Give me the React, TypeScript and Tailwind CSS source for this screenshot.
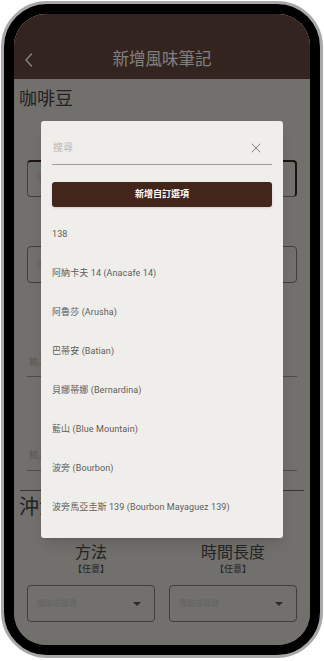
import { X } from "lucide-react";

const font = { fontFamily: '"Roboto", "Noto Sans CJK TC", sans-serif' };

const beans = [
  "138",
  "阿納卡夫 14 (Anacafe 14)",
  "阿魯莎 (Arusha)",
  "巴蒂安 (Batian)",
  "貝娜蒂娜 (Bernardina)",
  "藍山 (Blue Mountain)",
  "波旁 (Bourbon)",
  "波旁馬亞圭斯 139 (Bourbon Mayaguez 139)",
];

function Caret() {
  return <span className="h-0 w-0 border-x-[4px] border-t-[4px] border-x-transparent border-t-[#555]" />;
}

function Picker({ label }: { label: string }) {
  return (
    <div className="flex flex-1 flex-col items-center">
      <div className="text-[16px] leading-[20px] text-[#4a4a4a]">{label}</div>
      <div className="text-[9px] leading-[12px] text-[#4a4a4a]">【任意】</div>
      <div className="mt-[10px] flex h-[37px] w-full items-center justify-between rounded-[4px] border border-[#7e7c76] pl-[9px] pr-[13px]">
        <span className="text-[8px] text-[#c9c7c0]">選取或搜尋</span>
        <Caret />
      </div>
    </div>
  );
}

export default function App() {
  return (
    <div className="h-[661px] w-[324px] bg-white p-[1px]" style={font}>
      <div className="h-[657px] w-[322px] rounded-[46px] border-[3px] border-[#a8a8a8] bg-black p-[10px]">
        <div className="relative h-[631px] w-[296px] overflow-hidden rounded-[32px] bg-[#e2e0d8]">
          {/* page under the dialog */}
          <header className="flex h-[65px] items-end bg-[#68483e]">
            <div className="relative flex h-[38px] w-full items-center justify-center">
              <svg className="absolute left-[9px]" width="12" height="16" viewBox="0 0 12 16" fill="none">
                <path d="M8.5 2 L3 8 L8.5 14" stroke="white" strokeWidth="1.6" strokeLinecap="round" strokeLinejoin="round" />
              </svg>
              <h1 className="text-[16.5px] text-white">新增風味筆記</h1>
            </div>
          </header>

          <div className="px-[5px]">
            <h2 className="mt-[8px] text-[18px] leading-[24px] text-[#444]">咖啡豆</h2>
            <div className="px-[8px]">
              <div className="mt-[49px] flex h-[37px] items-center rounded-[4px] border border-[#7e7c76] border-r-2 border-t-2 border-r-[#3b2823] border-t-[#3b2823] pl-[9px]">
                <span className="text-[8px] text-[#c9c7c0]">選取或搜尋</span>
              </div>
              <div className="mt-[49px] flex h-[37px] items-center rounded-[4px] border border-[#7e7c76] pl-[9px]">
                <span className="text-[8px] text-[#c9c7c0]">選取或搜尋</span>
              </div>
              <div className="mt-[73px] border-b border-[#9a9892] pb-[8px] pl-[2px] text-[9px] leading-[12px] text-[#b9b7b0]">輸入產地</div>
              <div className="mt-[72px] border-b border-[#9a9892] pb-[9px] pl-[2px] text-[9px] leading-[12px] text-[#b9b7b0]">輸入處理法</div>
            </div>
            <div className="mx-[1px] mt-[19px] border-t border-[#6e6c66]" />
            <h2 className="mt-[2px] text-[20px] leading-[28px] text-[#444]">沖泡</h2>
            <div className="mt-[22px] flex gap-[14px] px-[8px]">
              <Picker label="方法" />
              <Picker label="時間長度" />
            </div>
          </div>

          {/* dialog */}
          <div className="absolute inset-0 flex items-center justify-center bg-black/50">
            <div className="flex h-[417px] w-[242px] flex-col overflow-hidden rounded-[3px] bg-[#f0eeea] px-[11px] shadow-lg">
              <div className="mt-[19px] flex shrink-0 items-center justify-between border-b border-[#9c9c9c] pb-[8px] pl-[1px] pr-[8px]">
                <span className="text-[10px] leading-[16px] text-[#b8b8b8]">搜尋</span>
                <X size={16} strokeWidth={1.2} className="text-[#666]" />
              </div>
              <button className="mt-[17px] h-[25px] w-full shrink-0 rounded-[3px] bg-[#42261c] text-[9px] font-bold text-white shadow">
                新增自訂選項
              </button>
              <ul className="mt-[8px] min-h-0 flex-1 overflow-hidden">
                {beans.map((b) => (
                  <li key={b} className="flex h-[39px] items-center text-[9px] tracking-[0.1px] text-[#5c5c5c]">
                    {b}
                  </li>
                ))}
              </ul>
            </div>
          </div>
        </div>
      </div>
    </div>
  );
}
